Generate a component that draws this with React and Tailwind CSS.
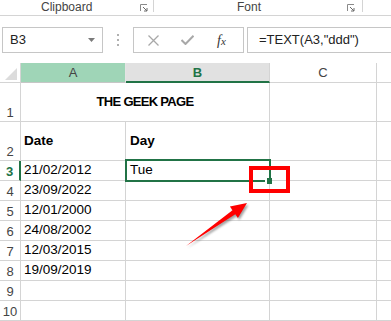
import React from 'react';

const GRID = 'border-[#d4d4d4]';

const rows = [
    { n: '1', h: 'h-[39px]', title: 'THE GEEK PAGE' },
    { n: '2', h: 'h-[39px]', a: 'Date', b: 'Day', bold: true },
    { n: '3', h: 'h-[20px]', a: '21/02/2012', b: 'Tue', sel: true },
    { n: '4', h: 'h-[20px]', a: '23/09/2022' },
    { n: '5', h: 'h-[20px]', a: '12/01/2000' },
    { n: '6', h: 'h-[20px]', a: '24/08/2002' },
    { n: '7', h: 'h-[20px]', a: '12/03/2015' },
    { n: '8', h: 'h-[20px]', a: '19/09/2019' },
    { n: '9', h: 'h-[20px]' },
    { n: '10', h: 'h-[20px]' },
];

function Launcher() {
    return (
        <svg width="8" height="8" viewBox="0 0 8 8" className="shrink-0">
            <path d="M0.5 7V0.5H7" stroke="#8a8a8a" fill="none" />
            <path d="M3 3L7 7M7 4V7H4" stroke="#6a6a6a" fill="none" />
        </svg>
    );
}

function Row({ r }) {
    const text = r.bold ? 'font-bold' : '';
    return (
        <div className={`flex ${r.h}`}>
            <div className={`w-[21px] shrink-0 border-b ${GRID} flex items-end justify-center pb-[2px] text-[13px] leading-none ${r.sel ? 'border-r-2 border-r-[#217346] text-[#217346] font-bold' : 'border-r text-[#444]'}`}>
                {r.n}
            </div>
            {r.title ? (
                <div className={`w-[249px] shrink-0 border-r border-b ${GRID} flex items-center justify-center text-[13px] font-bold tracking-[-0.7px] text-black`}>
                    {r.title}
                </div>
            ) : (
                <>
                    <div className={`w-[105px] shrink-0 border-r border-b ${GRID} flex items-center pl-[3px] text-[13.5px] text-black ${text}`}>
                        {r.a}
                    </div>
                    <div className={`w-[144px] shrink-0 border-r border-b ${GRID} flex items-center pl-[4px] text-[13.5px] text-black ${text}`}>
                        {r.b}
                    </div>
                </>
            )}
            <div className={`w-[107px] shrink-0 border-r border-b ${GRID}`} />
            <div className={`flex-1 border-b ${GRID}`} />
        </div>
    );
}

export default function App() {
    return (
        <div className="relative w-[391px] h-[321px] overflow-hidden bg-white" style={{ fontFamily: '"Liberation Sans", Arial, sans-serif' }}>
            {/* ribbon group labels */}
            <div className="flex h-[16px] border-b border-[#d4d4d4] text-[12px] text-[#444] leading-[12px]">
                <div className="w-[153px] flex items-start pt-[1px]">
                    <span className="ml-[41px]">Clipboard</span>
                    <span className="ml-auto mr-[5px] mt-[3px]"><Launcher /></span>
                </div>
                <div className="w-px h-[12px] bg-[#d4d4d4]" />
                <div className="w-[208px] flex items-start pt-[1px]">
                    <span className="ml-[83px]">Font</span>
                    <span className="ml-auto mr-[7px] mt-[3px]"><Launcher /></span>
                </div>
                <div className="w-px h-[12px] bg-[#d4d4d4]" />
            </div>

            {/* formula bar */}
            <div className="flex mt-[11px] h-[26px]">
                <div className="ml-[2px] w-[101px] shrink-0 border border-[#c6c6c6] flex items-center pl-[7px] pr-[7px] text-[13px] text-[#222]">
                    <span>B3</span>
                    <svg width="7" height="4" viewBox="0 0 7 4" className="ml-auto">
                        <path d="M0 0H7L3.5 4Z" fill="#7a7a7a" />
                    </svg>
                </div>
                <div className="w-[30px] shrink-0 flex flex-col items-center justify-center gap-[3px]">
                    <span className="w-[2px] h-[2px] bg-[#b0b0b0]" />
                    <span className="w-[2px] h-[2px] bg-[#b0b0b0]" />
                    <span className="w-[2px] h-[2px] bg-[#b0b0b0]" />
                </div>
                <div className="w-[111px] shrink-0 border border-[#c6c6c6] flex items-center">
                    <svg width="11" height="11" viewBox="0 0 11 11" className="ml-[14px]">
                        <path d="M0.5 0.5L10.5 10.5M10.5 0.5L0.5 10.5" stroke="#a8a8a8" strokeWidth="1.3" />
                    </svg>
                    <svg width="13" height="10" viewBox="0 0 13 10" className="ml-[22px]">
                        <path d="M0.5 5L4.5 9L12.5 0.8" stroke="#a8a8a8" strokeWidth="2" fill="none" />
                    </svg>
                    <span className="ml-[23px] text-[14px] italic text-[#333]" style={{ fontFamily: '"Liberation Serif", serif' }}>
                        f<span className="text-[11px]">x</span>
                    </span>
                </div>
                <div className="ml-[3px] w-[160px] shrink-0 border border-[#c6c6c6] flex items-center pl-[11px] text-[13px] text-[#222]">
                    =TEXT(A3,"ddd")
                </div>
            </div>

            {/* grid */}
            <div className="mt-[10px]">
                <div className="flex h-[20px] text-[13px] leading-none">
                    <div className={`w-[21px] shrink-0 border-r border-b ${GRID} flex items-end justify-end pr-[3px] pb-[2px]`}>
                        <svg width="12" height="12" viewBox="0 0 12 12">
                            <path d="M12 0V12H0Z" fill="#dcdcdc" />
                        </svg>
                    </div>
                    <div className="w-[105px] shrink-0 border-r border-b border-r-[#e4e4e4] border-b-[#c6c6c6] bg-[#9fd5b7] flex items-center justify-center text-[#444]">A</div>
                    <div className="w-[144px] shrink-0 border-r border-r-[#d4d4d4] border-b-2 border-b-[#217346] bg-[#e1e1e1] flex items-center justify-center font-bold text-[#217346]">B</div>
                    <div className={`w-[107px] shrink-0 border-r border-b ${GRID} flex items-center justify-center text-[#444]`}>C</div>
                    <div className={`flex-1 border-b ${GRID}`} />
                </div>
                {rows.map(r => <Row key={r.n} r={r} />)}
            </div>

            {/* active cell outline and fill handle */}
            <div className="absolute left-[125px] top-[159px] w-[146px] h-[23px] border-2 border-[#217346]" />
            <div className="absolute left-[265px] top-[178px] w-[7px] h-[6px] border-l-2 border-white bg-[#217346]" />

            {/* annotation */}
            <div className="absolute left-[249px] top-[166px] w-[41px] h-[27px] border-4 border-[#ff0000]" />
            <svg className="absolute left-0 top-0 pointer-events-none" width="391" height="321" viewBox="0 0 391 321">
                <defs>
                    <filter id="sh" x="-20%" y="-20%" width="140%" height="140%">
                        <feGaussianBlur stdDeviation="1.2" />
                    </filter>
                </defs>
                <polygon
                    points="186,246 232.5,210.2 229.9,206.5 247,203 237.9,217.9 235.3,214.2"
                    fill="#555" opacity="0.55" transform="translate(1.5 2)" filter="url(#sh)" />
                <polygon
                    points="186,246 232.5,210.2 229.9,206.5 247,203 237.9,217.9 235.3,214.2"
                    fill="#ff0000" />
            </svg>
        </div>
    );
}
